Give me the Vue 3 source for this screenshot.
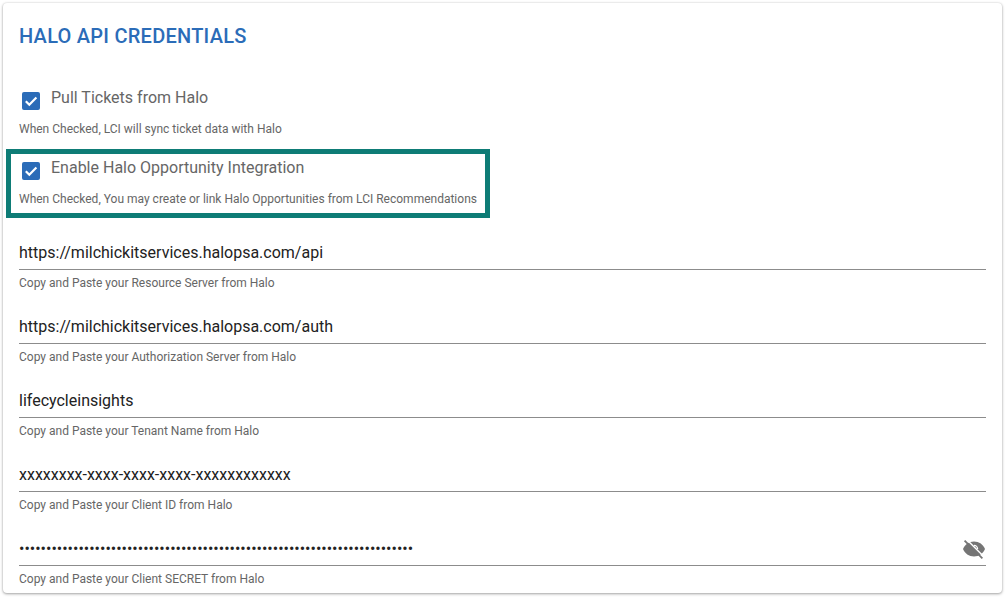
<script setup>
const fields = [
  { value: 'https://milchickitservices.halopsa.com/api', hint: 'Copy and Paste your Resource Server from Halo' },
  { value: 'https://milchickitservices.halopsa.com/auth', hint: 'Copy and Paste your Authorization Server from Halo' },
  { value: 'lifecycleinsights', hint: 'Copy and Paste your Tenant Name from Halo' },
  { value: 'xxxxxxxx-xxxx-xxxx-xxxx-xxxxxxxxxxxx', hint: 'Copy and Paste your Client ID from Halo' },
  { value: '•'.repeat(73), hint: 'Copy and Paste your Client SECRET from Halo', secret: true }
]
</script>

<template>
  <div class="page">
    <section class="card">
      <h2 class="title">HALO API CREDENTIALS</h2>

      <div class="check first">
        <div class="check-row">
          <span class="box">
            <svg viewBox="0 0 18 18" width="18" height="18"><path d="M3.8 9.3 7.3 12.8 14.4 5.6" fill="none" stroke="#fff" stroke-width="2.2"/></svg>
          </span>
          <span class="check-label">Pull Tickets from Halo</span>
        </div>
        <div class="hint check-hint">When Checked, LCI will sync ticket data with Halo</div>
      </div>

      <div class="highlight">
        <div class="check-row">
          <span class="box">
            <svg viewBox="0 0 18 18" width="18" height="18"><path d="M3.8 9.3 7.3 12.8 14.4 5.6" fill="none" stroke="#fff" stroke-width="2.2"/></svg>
          </span>
          <span class="check-label">Enable Halo Opportunity Integration</span>
        </div>
        <div class="hint check-hint">When Checked, You may create or link Halo Opportunities from LCI Recommendations</div>
      </div>

      <div class="fields">
        <div v-for="f in fields" :key="f.hint" class="field">
          <div class="input">
            <span class="value">{{ f.value }}</span>
            <svg v-if="f.secret" class="eye" viewBox="0 0 24 24" width="24" height="24">
              <path fill="#757575" d="M12 4.5C7 4.5 2.73 7.61 1 12c1.73 4.39 6 7.5 11 7.5s9.27-3.11 11-7.5c-1.73-4.39-6-7.5-11-7.5z"/>
              <path d="M12 8.4a3.6 3.6 0 0 1 3.6 3.6" fill="none" stroke="#fff" stroke-width="1.3"/>
              <path d="M4.4 2.2 22 19.8" fill="none" stroke="#fff" stroke-width="1.4"/>
              <path d="M2.6 3.6 20.4 21.4" fill="none" stroke="#757575" stroke-width="1.8"/>
            </svg>
          </div>
          <div class="hint">{{ f.hint }}</div>
        </div>
      </div>
    </section>
  </div>
</template>

<style>
html, body { margin: 0; background: #fff; }
</style>

<style scoped>
.page {
  width: 1006px;
  height: 597px;
  box-sizing: border-box;
  padding: 3px 4px 4px 3px;
  overflow: hidden;
  font-family: Roboto, "Liberation Sans", sans-serif;
}
.card {
  height: 100%;
  box-sizing: border-box;
  padding: 22px 16px 0;
  background: #fff;
  border-radius: 4px;
  box-shadow: 0 1px 3px rgba(0, 0, 0, .35), 0 0 2px rgba(0, 0, 0, .12);
}
.title {
  margin: 0;
  font-size: 20px;
  line-height: 22px;
  font-weight: 500;
  letter-spacing: .25px;
  color: #2b6cb8;
}
.check.first { margin-top: 42px; }
.check-row {
  display: flex;
  align-items: flex-start;
  height: 24px;
}
.box {
  width: 18px;
  height: 18px;
  margin: 3px 11px 0 3px;
  border-radius: 2px;
  background: #2b6cb8;
  flex: none;
}
.box svg { display: block; }
.check-label {
  font-size: 16px;
  line-height: 16px;
  color: #666;
  margin-top: 1px;
}
.hint {
  font-size: 12px;
  line-height: 14px;
  color: #666;
}
.check-hint { margin-top: 9px; }
.highlight {
  width: 484px;
  height: 69px;
  box-sizing: border-box;
  margin: 13px 0 0 -13px;
  padding: 5px 0 0 8px;
  border: 5px solid #0e7c76;
}
.fields { margin-top: 15px; }
.field { height: 74px; }
.input {
  height: 37px;
  display: flex;
  align-items: center;
  justify-content: space-between;
  box-sizing: border-box;
  padding-top: 2px;
  border-bottom: 1px solid #8c8c8c;
  font-size: 16px;
  color: #222;
}
.eye { margin-top: 2px; }
.field .hint { margin-top: 6px; }
</style>
